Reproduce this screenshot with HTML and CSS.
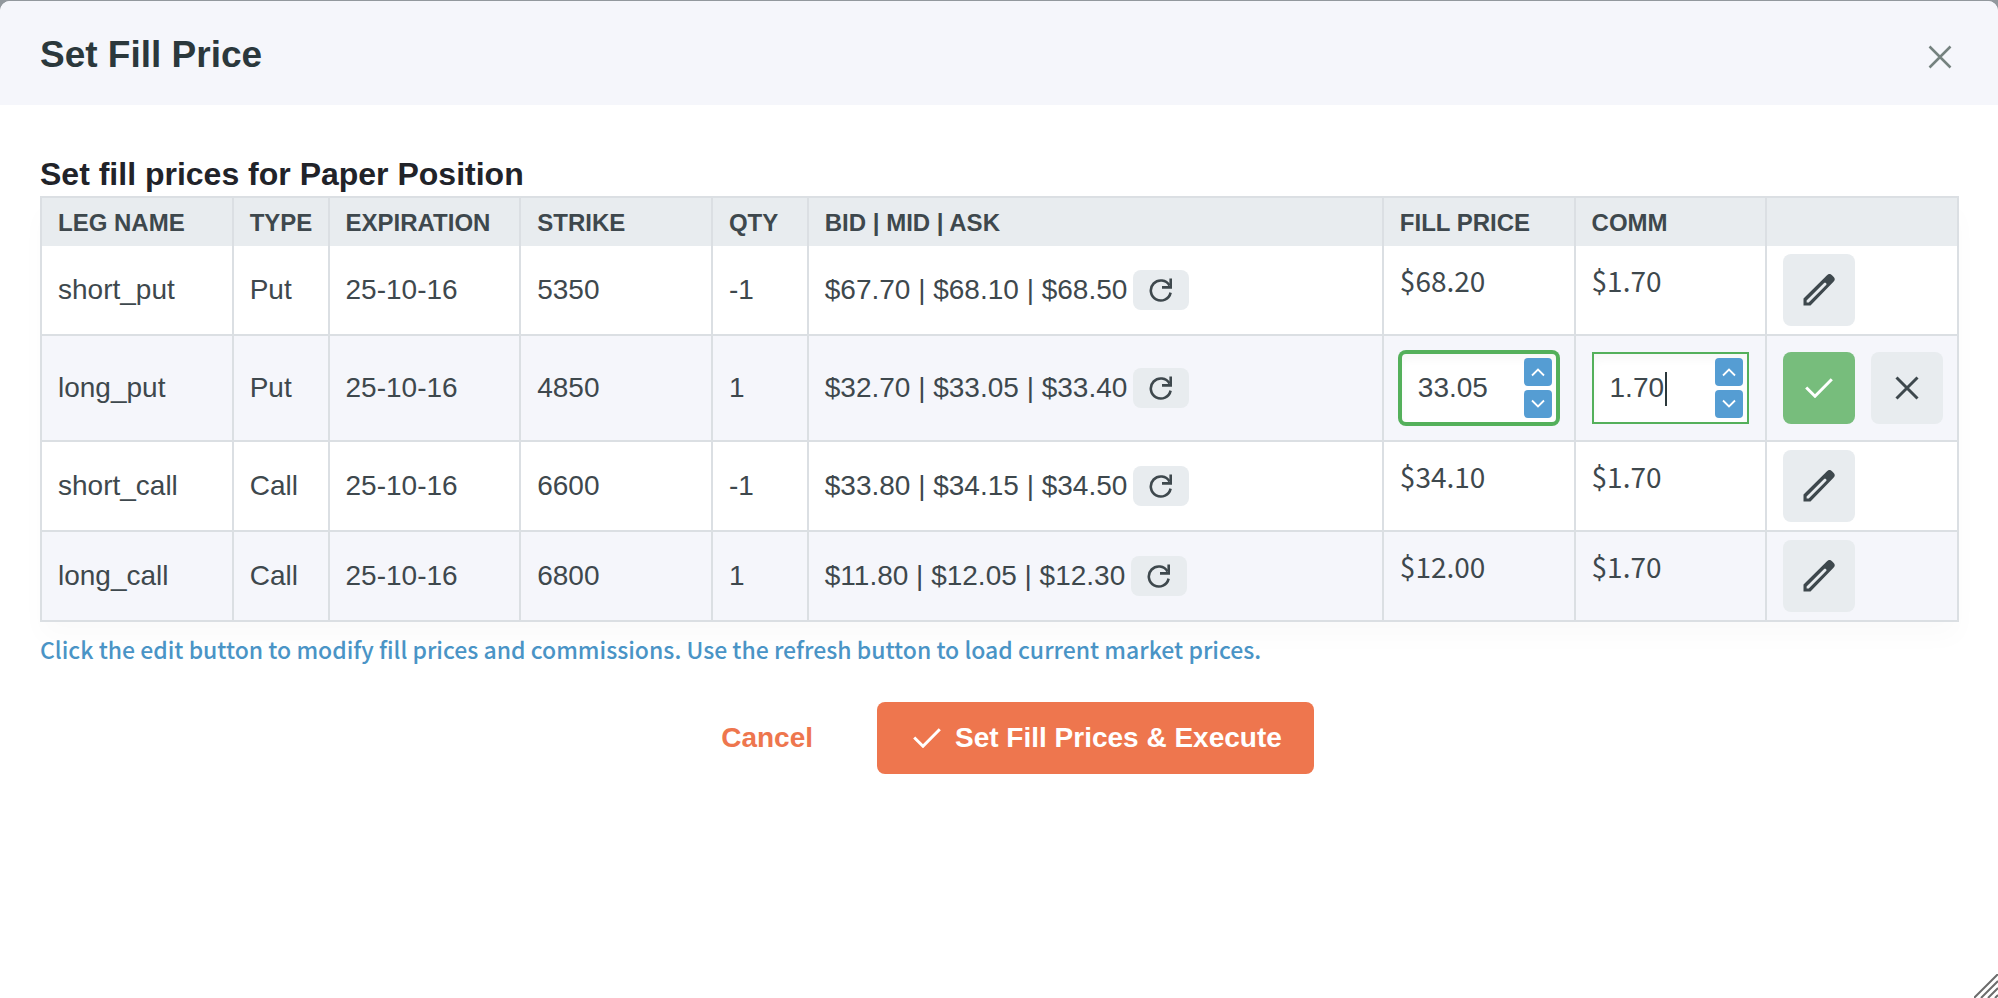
FILE: index.html
```
<!DOCTYPE html>
<html lang="en">
<head>
    <meta charset="utf-8">
    <meta name="viewport" content="width=device-width, initial-scale=1">
    <title>Set Fill Price</title>
    <link rel="stylesheet" href="styles.css">
</head>
<body>
    <svg class="sprite" aria-hidden="true">
        <symbol id="icon-refresh" viewBox="0 0 24 24">
            <path d="M21.6 14.600A10 10 0 1 1 20.500 7.500" fill="none" stroke="currentColor" stroke-width="2.600"/>
            <path d="M21.700 .5v8.900h-8.700" fill="none" stroke="currentColor" stroke-width="2.600"/>
        </symbol>
        <symbol id="icon-pencil" viewBox="0 0 32 32">
            <path d="M.5 31.500v-7L24 1.200a3.500 3.500 0 0 1 5 0l1.500 1.500a3.500 3.500 0 0 1 0 5L7.500 31.500z" fill="currentColor"/>
            <path d="M3.600 28.400v-1.900L21.400 8.800h1.200l.8.8v1.200L5.700 28.400z" class="pencil-core"/>
        </symbol>
        <symbol id="icon-check" viewBox="0 0 28 20">
            <path d="M1.200 9.500l8.800 8.700L26.800 1.200" fill="none" stroke="currentColor" stroke-width="3"/>
        </symbol>
        <symbol id="icon-close" viewBox="0 0 24 24">
            <path d="M1.500 1.500l21 21M22.500 1.500l-21 21" fill="none" stroke="currentColor"/>
        </symbol>
        <symbol id="icon-up" viewBox="0 0 14 10">
            <path d="M1 8.500l6-6 6 6" fill="none" stroke="currentColor" stroke-width="1.800"/>
        </symbol>
        <symbol id="icon-down" viewBox="0 0 14 10">
            <path d="M1 1.500l6 6 6-6" fill="none" stroke="currentColor" stroke-width="1.800"/>
        </symbol>
    </svg>

    <div class="dialog" role="dialog" aria-labelledby="dialogTitle">
        <div class="dialog-header">
            <h1 class="dialog-title" id="dialogTitle">Set Fill Price</h1>
            <button class="close-button" type="button" aria-label="Close"><svg><use href="#icon-close"/></svg></button>
        </div>

        <div class="dialog-body">
            <h2 class="section-title">Set fill prices for Paper Position</h2>
            <table class="legs">
                <colgroup>
                    <col class="col-md"><col class="col-sm"><col class="col-md"><col class="col-md"><col class="col-sm">
                    <col class="col-lg"><col class="col-md"><col class="col-md"><col class="col-md">
                </colgroup>
                <thead>
                    <tr>
                        <th>LEG NAME</th>
                        <th>TYPE</th>
                        <th>EXPIRATION</th>
                        <th>STRIKE</th>
                        <th>QTY</th>
                        <th>BID | MID | ASK</th>
                        <th>FILL PRICE</th>
                        <th>COMM</th>
                        <th></th>
                    </tr>
                </thead>
                <tbody>
                    <tr>
                        <td>short_put</td>
                        <td>Put</td>
                        <td>25-10-16</td>
                        <td>5350</td>
                        <td>-1</td>
                        <td><div class="quote">$67.70 | $68.10 | $68.50 <button class="refresh-button" type="button" aria-label="Refresh"><svg><use href="#icon-refresh"/></svg></button></div></td>
                        <td class="price">$68.20</td>
                        <td class="price">$1.70</td>
                        <td><div class="actions"><button class="icon-button" type="button" aria-label="Edit"><svg><use href="#icon-pencil"/></svg></button></div></td>
                    </tr>
                    <tr class="editing">
                        <td>long_put</td>
                        <td>Put</td>
                        <td>25-10-16</td>
                        <td>4850</td>
                        <td>1</td>
                        <td><div class="quote">$32.70 | $33.05 | $33.40 <button class="refresh-button" type="button" aria-label="Refresh"><svg><use href="#icon-refresh"/></svg></button></div></td>
                        <td>
                            <div class="spinner spinner-active">
                                <input type="text" value="33.05" aria-label="Fill price">
                                <div class="spinner-buttons">
                                    <button type="button" aria-label="Increase"><svg><use href="#icon-up"/></svg></button>
                                    <button type="button" aria-label="Decrease"><svg><use href="#icon-down"/></svg></button>
                                </div>
                            </div>
                        </td>
                        <td>
                            <div class="spinner">
                                <input type="text" value="1.70" aria-label="Commission">
                                <span class="caret"></span>
                                <div class="spinner-buttons">
                                    <button type="button" aria-label="Increase"><svg><use href="#icon-up"/></svg></button>
                                    <button type="button" aria-label="Decrease"><svg><use href="#icon-down"/></svg></button>
                                </div>
                            </div>
                        </td>
                        <td>
                            <div class="actions">
                                <button class="icon-button save" type="button" aria-label="Save"><svg><use href="#icon-check"/></svg></button>
                                <button class="icon-button discard" type="button" aria-label="Discard"><svg><use href="#icon-close"/></svg></button>
                            </div>
                        </td>
                    </tr>
                    <tr>
                        <td>short_call</td>
                        <td>Call</td>
                        <td>25-10-16</td>
                        <td>6600</td>
                        <td>-1</td>
                        <td><div class="quote">$33.80 | $34.15 | $34.50 <button class="refresh-button" type="button" aria-label="Refresh"><svg><use href="#icon-refresh"/></svg></button></div></td>
                        <td class="price">$34.10</td>
                        <td class="price">$1.70</td>
                        <td><div class="actions"><button class="icon-button" type="button" aria-label="Edit"><svg><use href="#icon-pencil"/></svg></button></div></td>
                    </tr>
                    <tr>
                        <td>long_call</td>
                        <td>Call</td>
                        <td>25-10-16</td>
                        <td>6800</td>
                        <td>1</td>
                        <td><div class="quote">$11.80 | $12.05 | $12.30 <button class="refresh-button" type="button" aria-label="Refresh"><svg><use href="#icon-refresh"/></svg></button></div></td>
                        <td class="price">$12.00</td>
                        <td class="price">$1.70</td>
                        <td><div class="actions"><button class="icon-button" type="button" aria-label="Edit"><svg><use href="#icon-pencil"/></svg></button></div></td>
                    </tr>
                </tbody>
            </table>
            <p class="hint">Click the edit button to modify fill prices and commissions. Use the refresh button to load current market prices.</p>

            <div class="dialog-actions">
                <button class="cancel-button" type="button">Cancel</button>
                <button class="submit-button" type="button"><svg><use href="#icon-check"/></svg>Set Fill Prices &amp; Execute</button>
            </div>
        </div>

        <svg class="resize-handle" viewBox="0 0 24 24" aria-hidden="true">
            <path d="M0 24L24 0M7 24L24 7M14 24L24 14M21 24L24 21"/>
        </svg>
    </div>
</body>
</html>
```
FILE: styles.css
```
:root {
    --text: #3e484d;
    --heading: #2b383c;
    --panel: #f5f6fb;
    --grey: #e8ecef;
    --border: #dbdfe3;
    --green: #54b05b;
    --blue: #559dd3;
    --orange: #ee764e;
}

* {
    box-sizing: border-box;
}

body {
    margin: 0;
    background: #92989d;
    color: var(--text);
    font-family: "Liberation Sans", Arial, sans-serif;
    font-size: 28px;
    line-height: 36px;
}

button {
    display: flex;
    align-items: center;
    justify-content: center;
    padding: 0;
    border: none;
    border-radius: 8px;
    background: var(--grey);
    color: var(--text);
    font-family: inherit;
    font-size: 28px;
    cursor: pointer;
}

.sprite {
    display: none;
}

.dialog {
    position: relative;
    min-height: calc(100vh - 1px);
    margin-top: 1px;
    border-radius: 10px 10px 0 0;
    background: #fff;
    overflow: hidden;
}

.dialog-header {
    display: flex;
    align-items: center;
    justify-content: space-between;
    padding: 30px 46px 26px 40px;
    background: var(--panel);
}

.dialog-title {
    margin: 0;
    color: var(--heading);
    font-size: 37px;
    line-height: 48px;
}

.close-button {
    margin-top: 4px;
    background: none;
    color: #75827f;
}

.close-button svg {
    width: 24px;
    height: 24px;
    stroke-width: 2.5;
}

.dialog-body {
    padding: 48px 39px 40px 40px;
}

.section-title {
    margin: 0;
    color: #212329;
    font-size: 32px;
    line-height: 43px;
}

.legs {
    width: 100%;
    table-layout: fixed;
    border-collapse: collapse;
    box-shadow: 0 16px 24px rgba(0, 0, 0, 0.02);
}

.col-sm {
    width: 5%;
}

.col-md {
    width: 10%;
}

.col-lg {
    width: 30%;
}

.legs th {
    padding: 9px 16px 7px;
    border: 2px solid var(--border);
    border-bottom: none;
    background: var(--grey);
    font-size: 24px;
    line-height: 32px;
    text-align: left;
    white-space: nowrap;
}

.legs td {
    padding: 8px 16px;
    border: 2px solid var(--border);
    white-space: nowrap;
}

.legs tbody tr:first-child td {
    border-top: none;
}

.legs tbody tr:nth-child(even) {
    background: var(--panel);
}

.legs .editing td {
    padding-top: 16px;
    padding-bottom: 16px;
}

.legs .price {
    padding-top: 16px;
    font-family: "Noto Sans CJK SC", sans-serif;
    vertical-align: top;
}

.quote {
    display: flex;
    align-items: center;
    gap: 6px;
}

.refresh-button {
    width: 56px;
    height: 40px;
}

.refresh-button svg {
    width: 24px;
    height: 24px;
}

.actions {
    display: flex;
    gap: 16px;
}

.icon-button {
    flex: none;
    width: 72px;
    height: 72px;
}

.icon-button svg {
    width: 32px;
    height: 32px;
}

.pencil-core {
    fill: var(--grey);
}

.icon-button.save {
    background: #77bd7c;
    color: #fff;
}

.icon-button.save svg {
    width: 28px;
    height: 20px;
}

.icon-button.discard svg {
    width: 24px;
    height: 24px;
    stroke-width: 3;
}

.spinner {
    position: relative;
    display: flex;
    height: 72px;
    padding: 4px;
    border: 2px solid var(--green);
    background: #fff;
    box-shadow: inset 0 6px 8px rgba(0, 0, 0, 0.03);
}

.spinner-active {
    border-radius: 6px;
    box-shadow: 0 0 0 2px var(--green), inset 0 6px 8px rgba(0, 0, 0, 0.03);
}

.spinner input {
    flex: 1;
    width: 0;
    padding: 0 0 0 12px;
    border: none;
    outline: none;
    background: none;
    color: var(--text);
    font-family: inherit;
    font-size: 28px;
}

.spinner-buttons {
    display: flex;
    flex-direction: column;
    justify-content: space-between;
}

.spinner-buttons button {
    width: 28px;
    height: 28px;
    border-radius: 4px;
    background: var(--blue);
    color: #fff;
}

.spinner-buttons svg {
    width: 14px;
    height: 10px;
}

.caret {
    position: absolute;
    top: 18px;
    left: 71px;
    width: 2px;
    height: 34px;
    background: var(--heading);
}

.hint {
    margin: 8px 0 34px;
    color: #4a94c6;
    font-family: "Noto Sans CJK SC", sans-serif;
    font-size: 23px;
    font-weight: 500;
    line-height: 38px;
}

.dialog-actions {
    display: flex;
    justify-content: center;
    gap: 28px;
}

.cancel-button,
.submit-button {
    height: 72px;
    padding: 0 36px;
    font-weight: bold;
}

.cancel-button {
    background: none;
    color: var(--orange);
}

.submit-button {
    gap: 14px;
    padding-right: 32px;
    background: var(--orange);
    color: #fff;
}

.submit-button svg {
    width: 28px;
    height: 20px;
}

.resize-handle {
    position: absolute;
    right: 0;
    bottom: 0;
    width: 24px;
    height: 24px;
    fill: none;
    stroke: #6c6c6c;
    stroke-width: 2;
}
```
